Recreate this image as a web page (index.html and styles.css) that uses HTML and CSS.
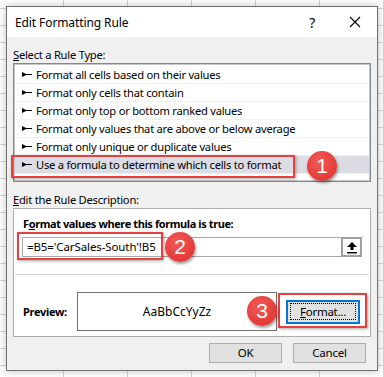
FILE: index.html
```html
<!DOCTYPE html>
<html>
<head>
  <meta charset="UTF-8">
  <title>Edit Formatting Rule</title>
  <link rel="stylesheet" href="styles.css">
</head>
<body>
<div class="dialog">
  <div class="titlebar">
    <span class="title">Edit Formatting Rule</span>
    <span class="help">?</span>
    <svg class="close" width="12" height="12" viewBox="0 0 12 12"><path d="M1 1 L11 11 M11 1 L1 11" stroke="#000" stroke-width="1.1" fill="none"/></svg>
  </div>
  <div class="body">
    <div class="label"><u>S</u>elect a Rule Type:</div>
    <div class="listbox">
      <div class="row"><svg class="arrow" width="10" height="7" viewBox="0 0 10 7"><path d="M0 1 L0 6 L4 4 L10 4 L10 3 L4 3 Z" fill="#000"/></svg>Format all cells based on their values</div>
      <div class="row"><svg class="arrow" width="10" height="7" viewBox="0 0 10 7"><path d="M0 1 L0 6 L4 4 L10 4 L10 3 L4 3 Z" fill="#000"/></svg>Format only cells that contain</div>
      <div class="row"><svg class="arrow" width="10" height="7" viewBox="0 0 10 7"><path d="M0 1 L0 6 L4 4 L10 4 L10 3 L4 3 Z" fill="#000"/></svg>Format only top or bottom ranked values</div>
      <div class="row"><svg class="arrow" width="10" height="7" viewBox="0 0 10 7"><path d="M0 1 L0 6 L4 4 L10 4 L10 3 L4 3 Z" fill="#000"/></svg>Format only values that are above or below average</div>
      <div class="row"><svg class="arrow" width="10" height="7" viewBox="0 0 10 7"><path d="M0 1 L0 6 L4 4 L10 4 L10 3 L4 3 Z" fill="#000"/></svg>Format only unique or duplicate values</div>
      <div class="row selected"><svg class="arrow" width="10" height="7" viewBox="0 0 10 7"><path d="M0 1 L0 6 L4 4 L10 4 L10 3 L4 3 Z" fill="#000"/></svg>Use a formula to determine which cells to format</div>
      <div class="mark mark-1"></div>
      <div class="badge badge-1">1</div>
    </div>

    <div class="label"><u>E</u>dit the Rule Description:</div>
    <div class="desc">
      <div class="desc-title">F<u>o</u>rmat values where this formula is true:</div>
      <div class="formula">
        <div class="formula-input">=B5='CarSales-South'!B5</div>
        <div class="formula-btn">
          <svg width="12" height="13" viewBox="0 0 12 13"><path d="M6 1 L11 6 L7.5 6 L7.5 9 L4.5 9 L4.5 6 L1 6 Z" fill="#000"/><rect x="1" y="11" width="10" height="1.5" fill="#000"/></svg>
        </div>
        <div class="mark mark-2"></div>
        <div class="badge badge-2">2</div>
      </div>
      <div class="sep"></div>
      <div class="preview-row">
        <span class="preview-label">Preview:</span>
        <div class="preview-box">AaBbCcYyZz</div>
        <div class="format-btn"><span class="focus"><u>F</u>ormat...</span></div>
        <div class="mark mark-3"></div>
        <div class="badge badge-3">3</div>
      </div>
    </div>

    <div class="buttons">
      <div class="btn">OK</div>
      <div class="btn">Cancel</div>
    </div>
  </div>
</div>
</body>
</html>
```

FILE: styles.css
```css
body {
  margin: 0;
  padding: 0;
  width: 384px;
  height: 377px;
  overflow: hidden;
  background-color: #fff;
  background-image:
    linear-gradient(to right, #d4d4d4 1px, transparent 1px),
    linear-gradient(to bottom, #d4d4d4 1px, transparent 1px);
  background-size: 64px 17px;
  background-position: -1px 8px;
  font-family: "Noto Sans", "Liberation Sans", sans-serif;
  font-size: 11.2px;
  letter-spacing: -0.25px;
  color: #000;
}

.dialog {
  margin: 6px 0 0 6px;
  width: 370px;
  height: 363px;
  border: 1px solid #707070;
  background: #f0f0f0;
  box-shadow: 0 0 8px rgba(0,0,0,0.25);
  display: flex;
  flex-direction: column;
}

.titlebar {
  height: 30px;
  background: #fff;
  display: flex;
  align-items: center;
  padding-left: 8px;
}
.title { flex: 1; font-size: 12px; letter-spacing: -0.1px; }
.help { font-size: 14px; margin-right: 34px; }
.close { margin-right: 16px; }

.body { padding: 0 6px; }

.label {
  margin-top: 10px;
  height: 16px;
  line-height: 16px;
}

.listbox {
  position: relative;
  background: #fff;
  border: 1px solid #828790;
  box-shadow: inset 0 0 0 1px #c8c8c8;
  padding: 2px 1px 7px 1px;
}
.row {
  height: 17px;
  line-height: 17px;
  border-bottom: 1px solid #f0f0f0;
  padding-left: 7px;
  display: flex;
  align-items: center;
  white-space: nowrap;
}
.row.selected { background: #dcdce4; }
.arrow { margin-right: 4px; flex: none; }

.mark {
  position: absolute;
  border: 2px solid #e8403f;
  box-shadow: 1px 1px 3px rgba(0,0,0,0.35);
}
.badge {
  position: absolute;
  width: 30px;
  height: 30px;
  border-radius: 50%;
  background: radial-gradient(circle at 40% 35%, #f25a57, #e33a38 70%);
  box-shadow: 1px 2px 3px rgba(0,0,0,0.4);
  color: #fff;
  font-family: "Liberation Sans", sans-serif;
  font-size: 21px;
  letter-spacing: 0;
  line-height: 30px;
  text-align: center;
}
.mark-1 { left: -3px; top: 91px; width: 280px; height: 19px; }
.badge-1 { left: 293px; top: 87px; }

.desc {
  background: #fff;
  border: 1px solid #adadad;
  height: 120px;
  padding: 7px 8px 0 8px;
}
.desc-title {
  font-weight: bold;
  font-size: 11px;
  letter-spacing: -0.4px;
  height: 16px;
  line-height: 16px;
  padding-left: 1px;
}
.formula {
  position: relative;
  margin-top: 5px;
  display: flex;
  height: 20px;
}
.formula-input {
  flex: 1;
  border: 1px solid #a8a8a8;
  border-right: none;
  line-height: 18px;
  padding-left: 4px;
  font-size: 11.5px;
  letter-spacing: -0.1px;
}
.formula-btn {
  width: 17px;
  height: 16px;
  border: 2px solid #a0a0a0;
  background: #fff;
  display: flex;
  align-items: center;
  justify-content: center;
}
.mark-2 { left: -5px; top: -5px; width: 142px; height: 24px; }
.badge-2 { left: 143px; top: -5px; }

.sep {
  margin: 17px -7px 0 -7px;
  border-top: 1px solid #d0d0d0;
}

.preview-row {
  position: relative;
  margin-top: 17px;
  display: flex;
  align-items: center;
}
.preview-label {
  font-weight: bold;
  font-size: 11px;
  letter-spacing: -0.3px;
  width: 55px;
  padding-left: 1px;
  box-sizing: border-box;
}
.preview-box {
  width: 198px;
  height: 37px;
  border: 1px solid #707070;
  line-height: 37px;
  text-align: center;
  font-size: 12px;
  letter-spacing: 0;
}
.format-btn {
  margin-left: 9px;
  width: 70px;
  height: 20px;
  border: 2px solid #0078d7;
  background: #e1e1e1;
  display: flex;
  align-items: center;
  justify-content: center;
}
.focus {
  border: 1px dotted #000;
  line-height: 15px;
  width: 64px;
  text-align: center;
  font-size: 11.5px;
}
.mark-3 { left: 256px; top: 1px; width: 85px; height: 31px; }
.badge-3 { left: 225px; top: 4px; }

.buttons {
  display: flex;
  justify-content: flex-end;
  gap: 11px;
  margin-top: 6px;
  padding-right: 5px;
}
.btn {
  width: 71px;
  height: 18px;
  line-height: 18px;
  border: 1px solid #adadad;
  background: #e1e1e1;
  text-align: center;
  font-size: 11.5px;
}
```
